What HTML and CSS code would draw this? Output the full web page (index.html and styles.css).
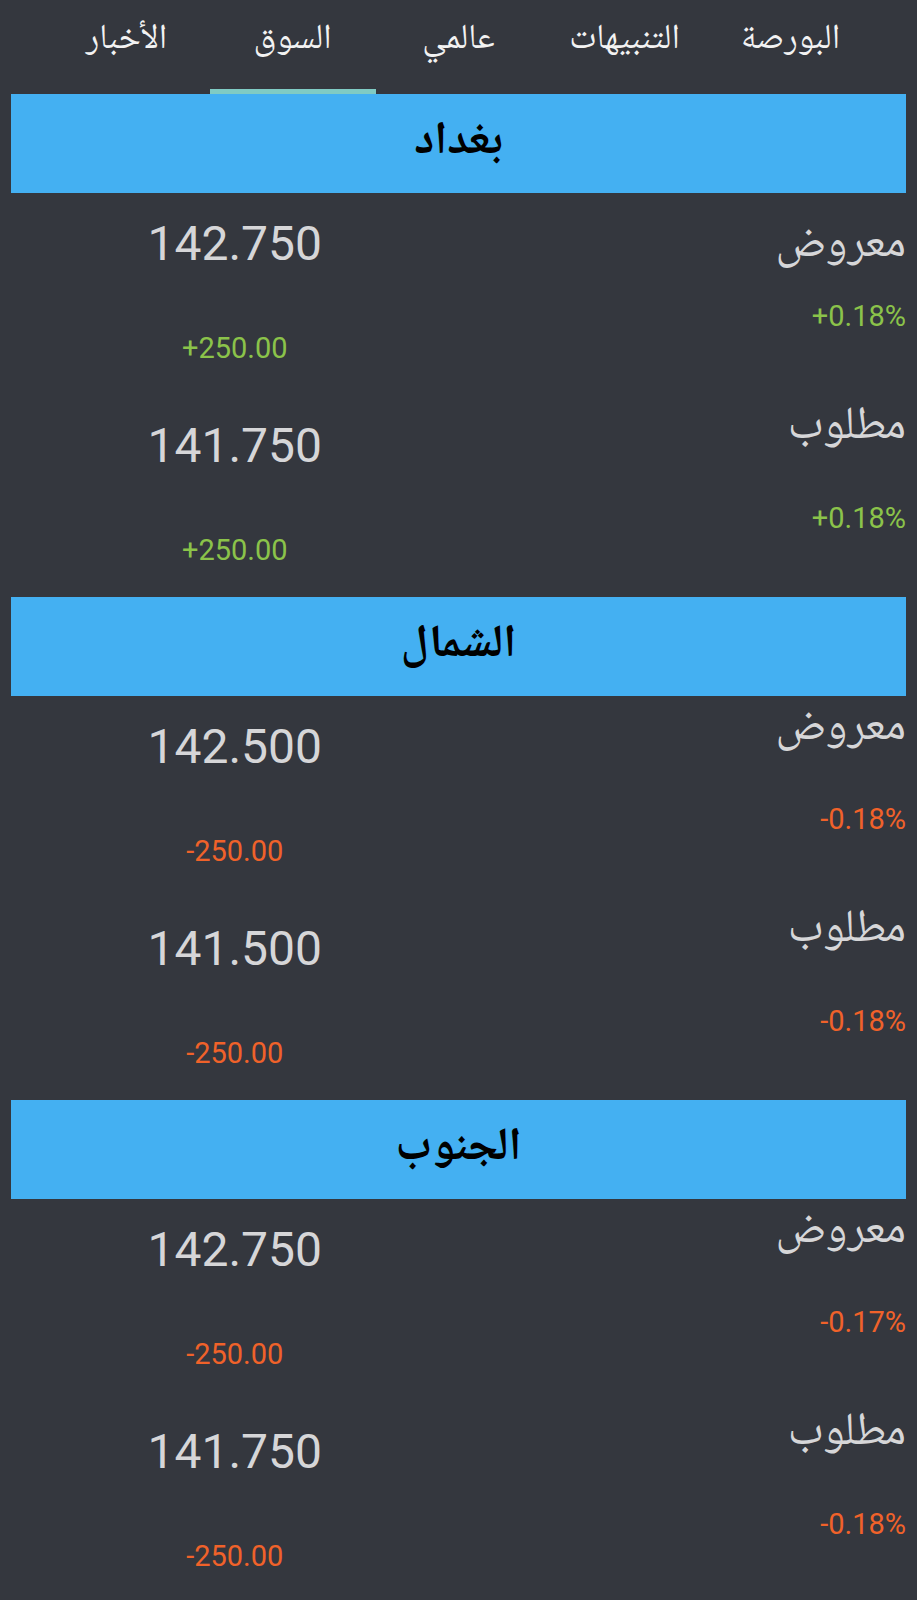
FILE: index.html
```html
<!DOCTYPE html>
<html lang="ar" dir="rtl">
<head>
    <meta charset="UTF-8">
    <meta name="viewport" content="width=device-width, initial-scale=1.0">
    <title>السوق</title>
    <link rel="stylesheet" href="styles.css">
</head>
<body>
    <nav class="tabs">
        <div class="tab">البورصة</div>
        <div class="tab">التنبيهات</div>
        <div class="tab">عالمي</div>
        <div class="tab active">السوق</div>
        <div class="tab">الأخبار</div>
    </nav>

    <section class="market">
        <h2 class="city">بغداد</h2>
        <div class="row first">
            <div class="side">
                <div class="label">معروض</div>
                <div class="pct up">+0.18%</div>
            </div>
            <div class="price">
                <div class="value">142.750</div>
                <div class="change up">+250.00</div>
            </div>
        </div>
        <div class="row">
            <div class="side">
                <div class="label">مطلوب</div>
                <div class="pct up">+0.18%</div>
            </div>
            <div class="price">
                <div class="value">141.750</div>
                <div class="change up">+250.00</div>
            </div>
        </div>
    </section>

    <section class="market">
        <h2 class="city">الشمال</h2>
        <div class="row">
            <div class="side">
                <div class="label">معروض</div>
                <div class="pct down">-0.18%</div>
            </div>
            <div class="price">
                <div class="value">142.500</div>
                <div class="change down">-250.00</div>
            </div>
        </div>
        <div class="row">
            <div class="side">
                <div class="label">مطلوب</div>
                <div class="pct down">-0.18%</div>
            </div>
            <div class="price">
                <div class="value">141.500</div>
                <div class="change down">-250.00</div>
            </div>
        </div>
    </section>

    <section class="market">
        <h2 class="city">الجنوب</h2>
        <div class="row">
            <div class="side">
                <div class="label">معروض</div>
                <div class="pct down">-0.17%</div>
            </div>
            <div class="price">
                <div class="value">142.750</div>
                <div class="change down">-250.00</div>
            </div>
        </div>
        <div class="row">
            <div class="side">
                <div class="label">مطلوب</div>
                <div class="pct down">-0.18%</div>
            </div>
            <div class="price">
                <div class="value">141.750</div>
                <div class="change down">-250.00</div>
            </div>
        </div>
    </section>
</body>
</html>
```

FILE: styles.css
```css
body {
    margin: 0;
    background-color: #34373e;
    font-family: "Noto Naskh Arabic", "Noto Sans Arabic", "DejaVu Sans", sans-serif;
    color: #d6d6d8;
}
.tabs {
    display: flex;
    justify-content: center;
    height: 94px;
}
.tab {
    width: 166px;
    box-sizing: border-box;
    padding-top: 19px;
    text-align: center;
    font-size: 35px;
    line-height: 44px;
    color: #f2f2f2;
}
.tab.active {
    border-bottom: 5px solid #80cbc4;
}
.market {
    margin: 0 11px;
}
.city {
    margin: 0;
    height: 99px;
    line-height: 99px;
    background-color: #44b0f2;
    color: #000;
    text-align: center;
    font-size: 46px;
    font-weight: bold;
}
.row {
    display: flex;
    height: 202px;
}
.side, .price {
    flex: 1;
    display: flex;
    flex-direction: column;
}
.side {
    align-items: flex-start;
    padding-top: 6px;
}
.row.first .side {
    padding-top: 26px;
}
.price {
    align-items: center;
    padding-top: 23px;
}
.label {
    font-size: 46px;
    line-height: 54px;
    color: #d6d6d8;
}
.value {
    font-family: Roboto, "Liberation Sans", sans-serif;
    font-size: 48px;
    line-height: 56px;
    color: #d6d6d8;
}
.pct, .change {
    font-family: Roboto, "Liberation Sans", sans-serif;
    font-size: 29px;
    line-height: 34px;
    direction: ltr;
}
.pct {
    margin-top: 46px;
}
.row.first .pct {
    margin-top: 26px;
}
.change {
    margin-top: 59px;
}
.up {
    color: #8bc34a;
}
.down {
    color: #f0622a;
}
```
